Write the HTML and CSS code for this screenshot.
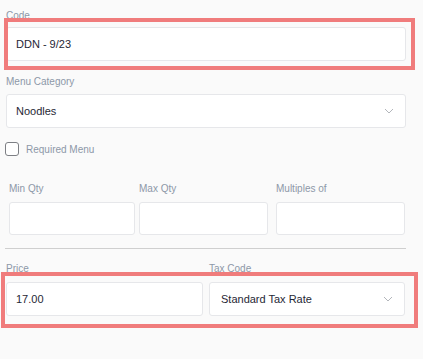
FILE: index.html
```html
<!DOCTYPE html>
<html>
<head>
<meta charset="utf-8">
<link rel="stylesheet" href="styles.css">
</head>
<body>
<div class="form">
  <label class="label label-code">Code</label>
  <div class="hl-wrap">
    <div class="input">DDN - 9/23</div>
    <div class="highlight hl-code"></div>
  </div>

  <label class="label label-cat">Menu Category</label>
  <div class="input select">
    <span>Noodles</span>
    <svg class="chev" width="10" height="6" viewBox="0 0 10 6"><path d="M1 1 L5 5 L9 1" fill="none" stroke="#b3b6bb" stroke-width="1"/></svg>
  </div>

  <div class="check-row">
    <span class="checkbox"></span>
    <span class="check-text">Required Menu</span>
  </div>

  <div class="qty-grid">
    <div class="qty-col">
      <label class="label">Min Qty</label>
      <div class="input qty"></div>
    </div>
    <div class="qty-col">
      <label class="label">Max Qty</label>
      <div class="input qty"></div>
    </div>
    <div class="qty-col qty-last">
      <label class="label">Multiples of</label>
      <div class="input qty"></div>
    </div>
  </div>

  <div class="divider"></div>

  <div class="price-row">
    <div class="price-col">
      <label class="label">Price</label>
      <div class="input">17.00</div>
    </div>
    <div class="tax-col">
      <label class="label">Tax Code</label>
      <div class="input select">
        <span>Standard Tax Rate</span>
        <svg class="chev" width="10" height="6" viewBox="0 0 10 6"><path d="M1 1 L5 5 L9 1" fill="none" stroke="#b3b6bb" stroke-width="1"/></svg>
      </div>
    </div>
    <div class="highlight hl-price"></div>
  </div>
</div>
</body>
</html>
```
FILE: styles.css
```css
html, body {
  margin: 0;
  padding: 0;
  background: #fafafa;
}
body {
  font-family: "Liberation Sans", Arial, sans-serif;
  width: 423px;
  height: 359px;
  overflow: hidden;
}
.form {
  padding-left: 6px;
  width: 400px;
  padding-top: 10px;
}
.label {
  display: block;
  font-size: 10px;
  line-height: 12px;
  color: #8d98a8;
  white-space: nowrap;
}
.label-code { margin-bottom: 5px; }
.label-cat { margin-top: 15px; margin-bottom: 6px; }
.hl-wrap {
  position: relative;
}
.input {
  box-sizing: border-box;
  height: 34px;
  background: #fff;
  border: 1px solid #e6e7ea;
  border-radius: 3px;
  font-size: 11px;
  color: #1f2735;
  display: flex;
  align-items: center;
  padding-left: 9px;
}
.select {
  justify-content: space-between;
  padding-right: 11px;
}
.chev { display: block; }
.highlight {
  position: absolute;
  border: 4px solid #f07c7c;
  pointer-events: none;
}
.hl-code {
  top: -9px;
  left: -2px;
  right: -9px;
  bottom: -9px;
}
.check-row {
  display: flex;
  align-items: center;
  margin-top: 14px;
  margin-left: -1px;
  height: 14px;
}
.checkbox {
  box-sizing: border-box;
  width: 14px;
  height: 14px;
  border: 1px solid #7d7f84;
  border-radius: 3px;
  background: #fff;
}
.check-text {
  margin-left: 7px;
  font-size: 10px;
  color: #8d98a8;
}
.qty-grid {
  display: grid;
  grid-template-columns: 126px 129px 133px;
  column-gap: 4px;
  margin-top: 27px;
  margin-left: 3px;
}
.qty-last { padding-left: 4px; }
.qty-col .label { margin-bottom: 7px; }
.input.qty { height: 33px; }
.divider {
  height: 1px;
  background: #cfcfcf;
  margin-top: 13px;
  margin-left: -1px;
  width: 401px;
}
.price-row {
  position: relative;
  display: grid;
  grid-template-columns: 197px 196px;
  column-gap: 6px;
  margin-top: 14px;
}
.price-col .label, .tax-col .label { margin-bottom: 7px; }
.tax-col .input { padding-left: 11px; }
.hl-price {
  top: 9px;
  left: -5px;
  right: -12px;
  bottom: -12px;
}
```
